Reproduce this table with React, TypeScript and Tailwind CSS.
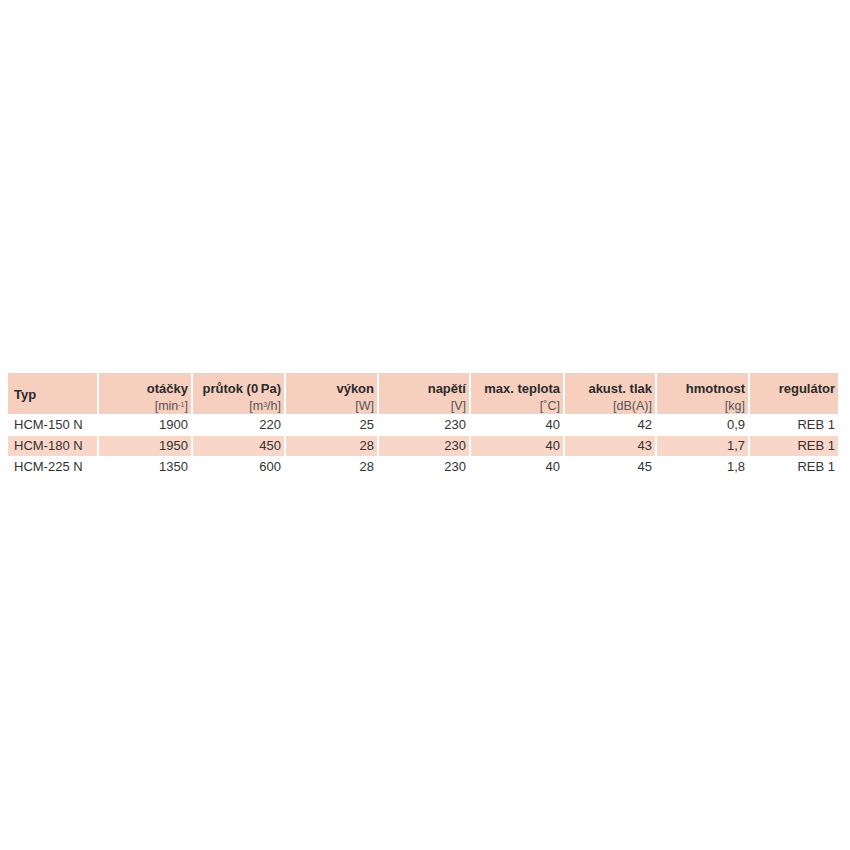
import React from 'react';

type Column = {
  title: string;
  unit?: React.ReactNode;
  align: 'left' | 'right';
};

const columns: Column[] = [
  { title: 'Typ', align: 'left' },
  { title: 'otáčky', unit: <>[min<sup className="text-[7px]">-1</sup>]</>, align: 'right' },
  { title: 'průtok (0\u2009Pa)', unit: <>[m<sup className="text-[7px]">3</sup>/h]</>, align: 'right' },
  { title: 'výkon', unit: '[W]', align: 'right' },
  { title: 'napětí', unit: '[V]', align: 'right' },
  { title: 'max. teplota', unit: '[˚C]', align: 'right' },
  { title: 'akust. tlak', unit: '[dB(A)]', align: 'right' },
  { title: 'hmotnost', unit: '[kg]', align: 'right' },
  { title: 'regulátor', align: 'right' },
];

const rows = [
  ['HCM-150 N', '1900', '220', '25', '230', '40', '42', '0,9', 'REB 1'],
  ['HCM-180 N', '1950', '450', '28', '230', '40', '43', '1,7', 'REB 1'],
  ['HCM-225 N', '1350', '600', '28', '230', '40', '45', '1,8', 'REB 1'],
];

export default function App() {
  return (
    <div
      className="w-[850px] h-[850px] bg-white pt-[373px] px-[8px] text-[#333]"
      style={{ fontFamily: '"Liberation Sans", Arial, sans-serif' }}
    >
      <div className="grid grid-cols-[89px_92px_91px_91px_90px_92px_90px_91px_88px] gap-x-[2px] gap-y-[1px] w-[830px]">
        {/* hlavička */}
        {columns.map((col, i) =>
          i === 0 ? (
            <div key={i} className="h-[41px] bg-[#f7cfbf] flex items-center pl-[6px] pt-[2px] text-[13px] font-bold text-[#2b2b2b]">
              {col.title}
            </div>
          ) : (
            <div key={i} className="h-[41px] bg-[#f7cfbf] flex flex-col items-end pt-[8px] pr-[3px]">
              <div className="text-[13px] leading-[16px] font-bold text-[#2b2b2b] whitespace-nowrap">{col.title}</div>
              {col.unit && (
                <div className="text-[12.5px] leading-[18px] text-[#555] whitespace-nowrap">{col.unit}</div>
              )}
            </div>
          )
        )}

        {/* data */}
        {rows.map((row, r) =>
          row.map((cell, c) => (
            <div
              key={`${r}-${c}`}
              className={`h-[20px] flex items-center text-[13px] whitespace-nowrap ${
                r === 1 ? 'bg-[#f8d6c8]' : 'bg-white'
              } ${columns[c].align === 'left' ? 'pl-[6px]' : 'justify-end pr-[3px]'}`}
            >
              {cell}
            </div>
          ))
        )}
      </div>
    </div>
  );
}
